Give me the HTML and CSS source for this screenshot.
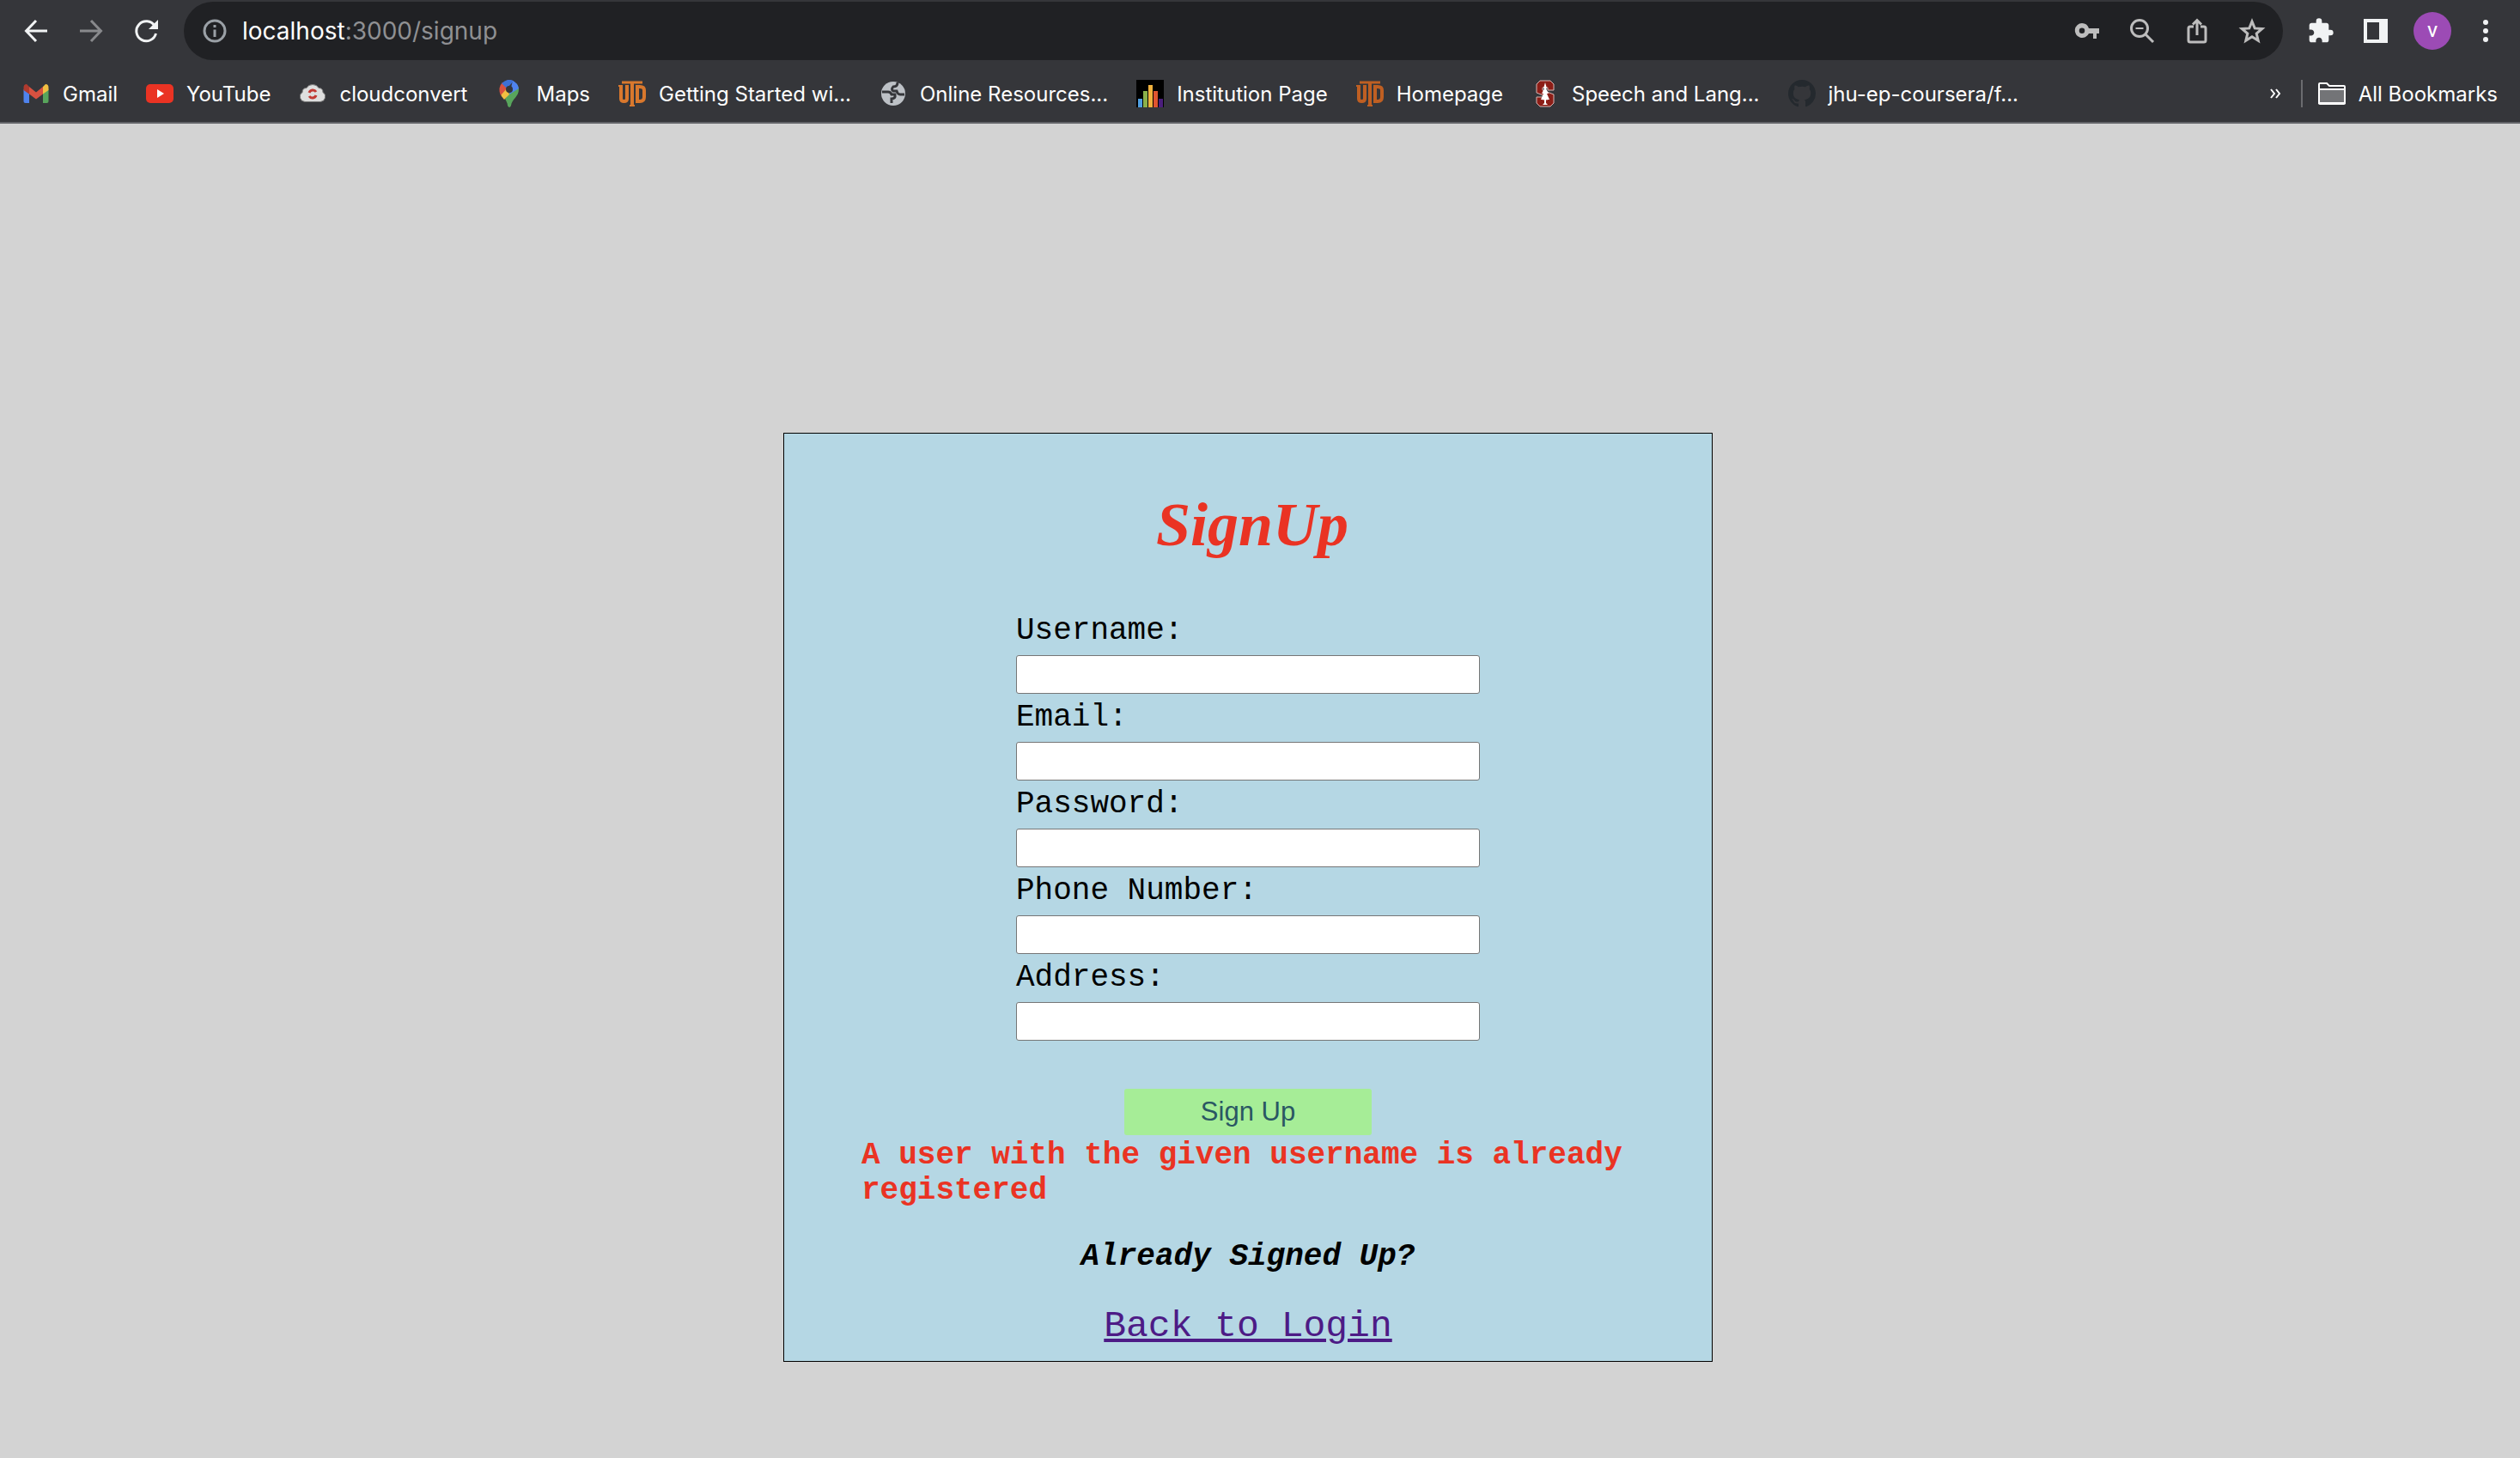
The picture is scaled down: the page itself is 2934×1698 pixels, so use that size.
FILE: index.html
```html
<!DOCTYPE html>
<html lang="en">
<head>
<meta charset="utf-8">
<title>Sign Up</title>
<link rel="stylesheet" href="styles.css">
</head>
<body>
<svg class="sprite" aria-hidden="true">
  <symbol id="utd" viewBox="0 0 32 32">
    <g fill="none" stroke="currentColor" stroke-width="4">
      <path d="M4 3h24" stroke-width="3"/>
      <path d="M16 3v28"/>
      <path d="M3 7v15q0 3 3.500 3t3.500-3V7"/>
      <path d="M22 7v18h3q5 0 5-5v-8q0-4-5-4h-5"/>
    </g>
    <path d="M13 30h6M0 7h5M8 7h4M20 25h3" stroke="currentColor" stroke-width="2"/>
  </symbol>
</svg>

<header class="browser">
  <div class="toolbar">
    <nav class="history">
      <button class="icon-btn" aria-label="Back"><svg width="28" height="28" viewBox="0 0 28 28" fill="none" stroke="#f1f3f4" stroke-width="3"><path d="M27 14H3M14 2L2.500 14l11.500 12"/></svg></button>
      <button class="icon-btn" aria-label="Forward"><svg width="28" height="28" viewBox="0 0 28 28" fill="none" stroke="#88898c" stroke-width="3"><path d="M1 14h24M14 2l11.500 12L14 26"/></svg></button>
      <button class="icon-btn" aria-label="Reload"><svg width="28" height="28" viewBox="0 0 28 28" fill="none" stroke="#f1f3f4" stroke-width="3"><path d="M24 8A11.500 11.500 0 1 0 25.500 17"/><path d="M28 1v11H17z" fill="#f1f3f4" stroke="none"/></svg></button>
    </nav>
    <div class="address">
      <svg width="28" height="28" viewBox="0 0 28 28" fill="none" stroke="#9aa0a6" stroke-width="3"><circle cx="14" cy="14" r="12"/><path d="M14 12.500V21M14 7v3"/></svg>
      <span class="url"><b>localhost</b>:3000/signup</span>
      <div class="address-tools">
        <button class="icon-btn" aria-label="Passwords"><svg width="32" height="32" viewBox="0 0 32 32"><path fill="#bdbdbd" fill-rule="evenodd" d="M10 7a8.500 8.500 0 1 0 8 12h5v6h4v-6h3v-6H18A8.500 8.500 0 0 0 10 7zm0 5.500a3 3 0 1 1 0 6.500a3 3 0 0 1 0-6.500z"/></svg></button>
        <button class="icon-btn" aria-label="Zoom"><svg width="32" height="32" viewBox="0 0 32 32" fill="none" stroke="#bdbdbd" stroke-width="3"><circle cx="13" cy="13" r="9.500"/><path d="M20 20l9 9"/><path d="M8.500 13h9" stroke-width="2"/></svg></button>
        <button class="icon-btn" aria-label="Share"><svg width="32" height="32" viewBox="0 0 32 32" fill="none" stroke="#bdbdbd" stroke-width="3"><path d="M12 11H8q-2 0-2 2v14q0 2 2 2h16q2 0 2-2V13q0-2-2-2h-4M16 21V4M11 8.500l5-5 5 5"/></svg></button>
        <button class="icon-btn" aria-label="Bookmark this tab"><svg width="32" height="32" viewBox="0 0 32 32" fill="none" stroke="#bdbdbd" stroke-width="3"><path d="M16 5l3.200 7.900 8.500.6-6.500 5.500 2 8.300L16 22.800l-7.200 4.500 2-8.300-6.500-5.500 8.500-.6z"/></svg></button>
      </div>
    </div>
    <div class="actions">
      <button class="icon-btn" aria-label="Extensions"><svg width="32" height="32" viewBox="0 0 24 24"><path fill="#f1f3f4" d="M20.500 11H19V7c0-1.100-.9-2-2-2h-4V3.500a2.500 2.500 0 0 0-5 0V5H4c-1.100 0-2 .9-2 2v3.800h1.500c1.500 0 2.700 1.200 2.700 2.700S5 16.200 3.500 16.200H2V20c0 1.100.9 2 2 2h3.800v-1.500c0-1.500 1.200-2.700 2.700-2.700s2.700 1.200 2.700 2.700V22H17c1.100 0 2-.9 2-2v-4h1.500a2.500 2.500 0 0 0 0-5z"/></svg></button>
      <button class="icon-btn" aria-label="Side panel"><svg width="32" height="32" viewBox="0 0 32 32"><path fill="#f1f3f4" fill-rule="evenodd" d="M2 2h28v28H2zM6 6v20h14V6z"/></svg></button>
      <button class="avatar" aria-label="Profile">V</button>
      <button class="icon-btn" aria-label="Menu"><svg width="32" height="32" viewBox="0 0 32 32" fill="#f1f3f4"><circle cx="16" cy="6" r="3"/><circle cx="16" cy="16" r="3"/><circle cx="16" cy="26" r="3"/></svg></button>
    </div>
  </div>

  <nav class="bookmarks">
    <a class="bookmark" href="#"><svg width="32" height="32" viewBox="0 0 32 32"><path fill="#4f83ee" d="M1.500 11l6.500 5v11H3.500q-2 0-2-2z"/><path fill="#58a55c" d="M30.500 11L24 16v11h4.500q2 0 2-2z"/><path fill="#d85140" d="M8 8l8 6.500L24 8v8.500l-8 6-8-6z"/><path fill="#b03a2e" d="M1.500 9q0-4 3.500-4L8 8v8.500L1.500 12z"/><path fill="#f1bf42" d="M30.500 9q0-4-3.500-4l-3 3v8.500l6.500-4.500z"/></svg>Gmail</a>
    <a class="bookmark" href="#"><svg width="32" height="32" viewBox="0 0 32 32"><rect y="5" width="32" height="22" rx="5" fill="#ea3323"/><path fill="#fff" d="M13 11l8 5-8 5z"/></svg>YouTube</a>
    <a class="bookmark" href="#"><svg width="32" height="32" viewBox="0 0 32 32"><path fill="#dedede" stroke="#777" d="M7 25.500a6 6 0 0 1-3-11q0-5 5-5 2-4 7-4t7 4q5 0 5 5a6 6 0 0 1-3 11z"/><path d="M12 15a4.500 4.500 0 0 1 8-1M20 18a4.500 4.500 0 0 1-8 1" fill="none" stroke="#c23a34" stroke-width="3"/></svg>cloudconvert</a>
    <a class="bookmark" href="#"><svg width="32" height="32" viewBox="0 0 32 32"><path fill="#58a55c" d="M27 11c0 9-8 11-9 19q-2 4-4 0c0-3-2-6-3-8L24 4q3 3 3 7z"/><path fill="#f1bf42" d="M5 14l7-6 4 9-6 6q-4-4-5-9z"/><path fill="#d85140" d="M8 3l6 6-8 9q-4-9 2-15z"/><path fill="#3d70d6" d="M7 4q8-7 14-2.500L13 10z"/><path fill="#4f83ee" d="M20 1q6 3 7 9L16 17z"/><circle cx="16" cy="11" r="4" fill="#35363a"/></svg>Maps</a>
    <a class="bookmark utd" href="#"><svg width="32" height="32"><use href="#utd"/></svg>Getting Started wi...</a>
    <a class="bookmark" href="#"><svg width="32" height="32" viewBox="0 0 32 32"><circle cx="16" cy="16" r="14" fill="#bdc1c6"/><path d="M3 14h7q3 0 4 3h4q1 5-4 5v5M21 3q0 5-5 5-3 3 0 5h4q1 4 4 4h5" fill="none" stroke="#35363a" stroke-width="3"/></svg>Online Resources...</a>
    <a class="bookmark" href="#"><svg width="32" height="32" viewBox="0 0 32 32"><path d="M0 0h32v32H0z"/><path fill="#4f9ee0" d="M2 22h5v10H2z"/><path fill="#8bb04a" d="M8 13h5v19H8z"/><path fill="#f0b23e" d="M14 6h5v26h-5z"/><path fill="#e0552f" d="M20 13h5v19h-5z"/><path fill="#4b1e7c" d="M26 22h5v10h-5z"/></svg>Institution Page</a>
    <a class="bookmark utd utd-dark" href="#"><svg width="32" height="32"><use href="#utd"/></svg>Homepage</a>
    <a class="bookmark" href="#"><svg width="32" height="32" viewBox="0 0 32 32"><path fill="#8c1e17" stroke="#d9b5b3" d="M10 1h12l4 4v7h-7v-3h-6v3l13 5v10l-4 4H10l-4-4v-7h7v3h6v-3L6 15V5z"/><path fill="#fff" d="M16 3l2 7h-1l3 6h-2l3 7h-4v4l2 2h-6l2-2v-4h-4l3-7h-2l3-6h-1z"/></svg>Speech and Lang...</a>
    <a class="bookmark" href="#"><svg width="32" height="32" viewBox="0 0 16 16"><path fill="#24292e" d="M8 0C3.580 0 0 3.580 0 8c0 3.540 2.290 6.530 5.470 7.590.4.070.55-.17.55-.38 0-.19-.01-.82-.01-1.490-2.010.37-2.530-.49-2.690-.94-.09-.23-.48-.94-.82-1.130-.28-.15-.68-.52-.01-.53.63-.01 1.080.58 1.230.82.72 1.210 1.870.87 2.330.66.070-.52.28-.87.51-1.070-1.780-.2-3.640-.89-3.640-3.950 0-.87.31-1.590.82-2.150-.08-.2-.36-1.020.08-2.120 0 0 .67-.21 2.200.82a7.600 7.600 0 0 1 4 0c1.530-1.040 2.200-.82 2.200-.82.44 1.100.16 1.920.08 2.120.51.56.82 1.270.82 2.150 0 3.070-1.870 3.750-3.650 3.950.29.25.54.73.54 1.480 0 1.070-.01 1.930-.01 2.200 0 .21.15.46.55.38A8 8 0 0 0 16 8c0-4.420-3.580-8-8-8z"/></svg>jhu-ep-coursera/f...</a>
    <div class="more">
      <button class="icon-btn" aria-label="More bookmarks"><svg width="16" height="16" viewBox="0 0 16 16" fill="none" stroke="#fff" stroke-width="2"><path d="M3 3l4 5-4 5M9 3l4 5-4 5"/></svg></button>
      <a class="bookmark all" href="#"><svg width="32" height="32" viewBox="0 0 32 32" fill="none" stroke="#fff" stroke-width="2"><path fill="#737477" d="M1 11h30v16H1z"/><path d="M1 11V5q0-1 1-1h8l3 3h17q1 0 1 1v19q0 1-1 1H2q-1 0-1-1z"/></svg>All Bookmarks</a>
    </div>
  </nav>
</header>

<main class="page">
  <form class="signup">
    <h1 class="title">SignUp</h1>
    <div class="fields">
      <label for="username">Username:</label>
      <input id="username" type="text">
      <label for="email">Email:</label>
      <input id="email" type="email">
      <label for="password">Password:</label>
      <input id="password" type="password">
      <label for="phone">Phone Number:</label>
      <input id="phone" type="tel">
      <label for="address">Address:</label>
      <input id="address" type="text">
    </div>
    <button class="submit" type="submit">Sign Up</button>
    <p class="error" role="alert">A user with the given username is already registered</p>
    <p class="question">Already Signed Up?</p>
    <a class="login" href="#">Back to Login</a>
  </form>
</main>
</body>
</html>
```
FILE: styles.css
```css
* {
  box-sizing: border-box;
}

body {
  margin: 0;
  min-height: 100vh;
  background: #d3d3d3;
  font-family: "Liberation Mono", "Courier New", monospace;
  font-size: 36px;
}

.sprite {
  display: none;
}

/* Browser chrome */
.browser {
  background: #35363a;
  border-bottom: 2px solid #626367;
  color: #fff;
  font-family: Inter, Roboto, sans-serif;
}

.toolbar {
  display: flex;
  align-items: center;
  height: 72px;
  padding: 0 24px 0 28px;
}

.icon-btn {
  display: flex;
  padding: 0;
  border: 0;
  background: none;
}

.icon-btn svg,
.address svg,
.bookmark svg {
  display: block;
  flex: none;
}

.history {
  display: flex;
  gap: 36px;
}

.address {
  display: flex;
  flex: 1;
  align-items: center;
  height: 68px;
  margin: 0 28px 0 30px;
  padding: 0 20px 0 22px;
  border-radius: 34px;
  background: #202124;
}

.url {
  margin-left: 18px;
  color: #8f9093;
  font-size: 28px;
}

.url b {
  color: #fff;
  font-weight: 400;
}

.address-tools {
  display: flex;
  gap: 32px;
  margin-left: auto;
}

.actions {
  display: flex;
  align-items: center;
  gap: 28px;
}

.actions .icon-btn:nth-child(2) {
  margin-left: 4px;
}

.avatar {
  width: 44px;
  height: 44px;
  padding: 0;
  border: 0;
  border-radius: 50%;
  background: #9c4bb5;
  color: #fff;
  font: 500 18px Roboto, sans-serif;
}

.actions .icon-btn:last-child {
  margin-left: -4px;
}

.bookmarks {
  display: flex;
  align-items: center;
  gap: 33px;
  height: 70px;
  padding: 4px 26px 0;
}

.bookmark {
  display: flex;
  align-items: center;
  gap: 15px;
  color: #fff;
  font-size: 24px;
  font-weight: 400;
  text-decoration: none;
  white-space: nowrap;
}

.utd svg {
  color: #d9782d;
}

.utd-dark svg {
  color: #bf5f22;
}

.more {
  display: flex;
  align-items: center;
  gap: 22px;
  margin-left: auto;
}

.all {
  padding-left: 18px;
  border-left: 2px solid #6b6c6f;
}

/* Sign-up card */
.page {
  display: flex;
  justify-content: center;
  padding: 360px 28px 112px 0;
}

.signup {
  display: flex;
  flex-direction: column;
  align-items: center;
  width: 1082px;
  padding: 66px 90px 16px;
  border: 1px solid #000;
  background: #b5d7e4;
}

.title {
  margin: 0 0 56px;
  padding-left: 10px;
  color: #ea3323;
  font: italic 700 72px/80px "Apple Chancery", "Liberation Serif", serif;
}

.fields {
  width: 60%;
}

.fields label {
  display: block;
  line-height: 56px;
}

.fields input {
  display: block;
  width: 100%;
  height: 45px;
  padding: 0 4px;
  border: 1px solid #767676;
  border-radius: 3px;
  background: #fff;
  font: inherit;
}

.submit {
  width: 288px;
  height: 54px;
  margin: 56px 0 3px;
  padding: 0;
  border: 0;
  border-radius: 3px;
  background: #a6ed97;
  color: #2a5763;
  font: 31px "Liberation Sans", Arial, sans-serif;
}

.error {
  align-self: stretch;
  margin: 0 0 36px;
  color: #ea3323;
  font-weight: 700;
  line-height: 41px;
}

.question {
  margin: 0 0 36px;
  font-style: italic;
  font-weight: 700;
  line-height: 41px;
}

.login {
  color: #4d1b86;
  font-size: 43px;
  line-height: 49px;
  text-decoration-thickness: 4px;
  text-underline-offset: 3px;
}
```
